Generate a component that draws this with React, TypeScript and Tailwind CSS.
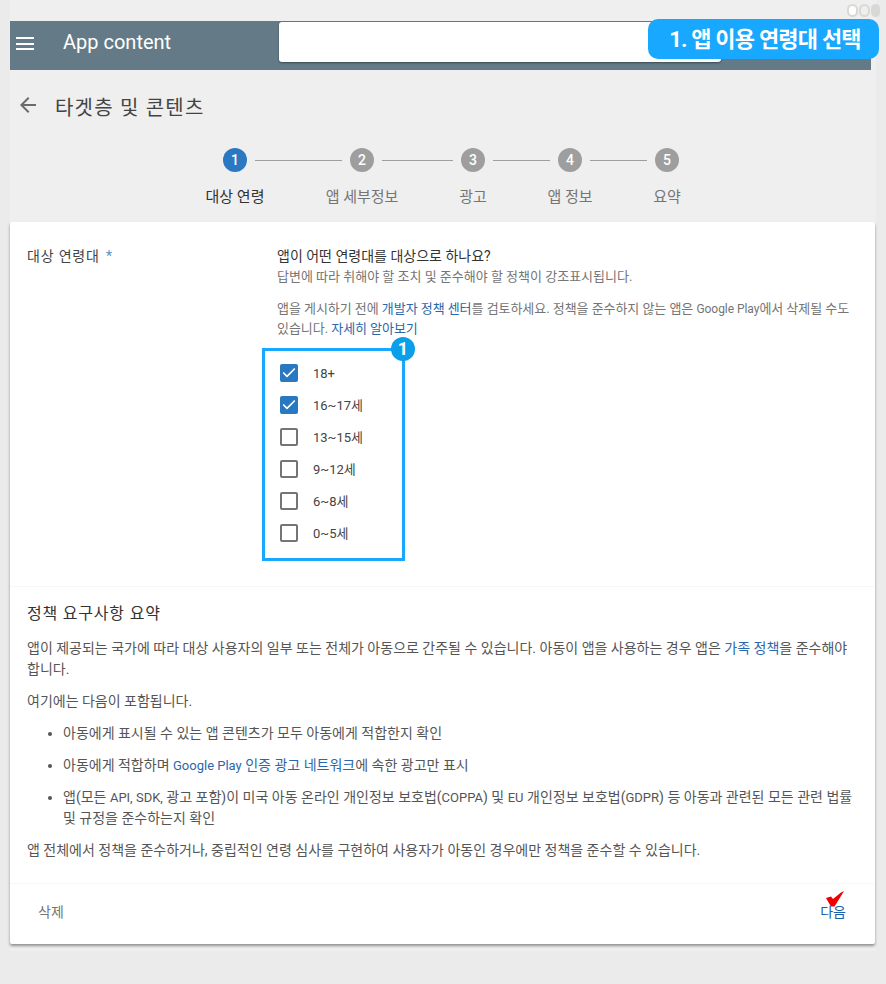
import type { ReactNode } from "react";
import { Check } from "lucide-react";

const fontStack = "font-['Roboto','Noto_Sans_CJK_KR',sans-serif]";

const steps = [
  { label: "대상 연령", line: "w-[87px]" },
  { label: "앱 세부정보", line: "w-[71px]" },
  { label: "광고", line: "w-[57px]" },
  { label: "앱 정보", line: "w-[57px]" },
  { label: "요약", line: "" },
];

const ages = [
  { label: "18+", checked: true },
  { label: "16~17세", checked: true },
  { label: "13~15세", checked: false },
  { label: "9~12세", checked: false },
  { label: "6~8세", checked: false },
  { label: "0~5세", checked: false },
];

// latin runs sit a pixel smaller than the hangul around them
function Latin({ children }: { children: ReactNode }) {
  return <span className="text-[13px]">{children}</span>;
}

function Stepper() {
  return (
    <div className="flex items-start pl-[213px]">
      {steps.map((step, i) => (
        <div key={step.label} className="flex items-start">
          <div className="flex w-6 flex-col items-center">
            <div
              className={`flex h-6 w-6 items-center justify-center rounded-full text-[14px] font-medium text-white ${
                i === 0 ? "bg-[#2b78c2]" : "bg-[#9e9e9e]"
              }`}
            >
              {i + 1}
            </div>
            <span
              className={`mt-[15px] whitespace-nowrap text-[15px] leading-[20px] ${
                i === 0 ? "text-[#333333]" : "text-[#757575]"
              }`}
            >
              {step.label}
            </span>
          </div>
          {step.line && <div className={`mx-2 mt-[12px] h-px bg-[#9e9e9e] ${step.line}`} />}
        </div>
      ))}
    </div>
  );
}

function AgeRow({ label, checked }: { label: string; checked: boolean }) {
  return (
    <div className="flex h-8 items-center pl-[15px]">
      {checked ? (
        <div className="flex h-[18px] w-[18px] items-center justify-center rounded-[2px] bg-[#2b78c2]">
          <Check className="h-4 w-4 text-white" strokeWidth={2.5} />
        </div>
      ) : (
        <div className="h-[18px] w-[18px] rounded-[2px] border-2 border-[#757575]" />
      )}
      <span className="ml-[15px] mt-[2px] text-[13px] text-[#444444]">{label}</span>
    </div>
  );
}

export default function App() {
  return (
    <div className={`relative h-[984px] w-[886px] overflow-hidden bg-[#ebebeb] ${fontStack}`}>
      {/* window dots */}
      <div className="absolute right-[6px] top-[4px] flex gap-[1px]">
        <div className="h-[13px] w-[11px] rounded-full border-2 border-[#d8d8d4] bg-white" />
        <div className="h-[13px] w-[11px] rounded-full border-2 border-[#d8d8d4] bg-[#efefef]" />
        <div className="h-[13px] w-[9px] rounded-full bg-[#d8d8d4]" />
      </div>

      {/* callout */}
      <div className="absolute left-[648px] top-[19px] flex h-10 w-[231px] items-center justify-center rounded-[10px] bg-[#18a8ff] pl-[3px] text-[22px] font-bold tracking-[-0.8px] text-white">
        1. 앱 이용 연령대 선택
      </div>

      <div className="ml-[10px] mt-0 h-[951px] w-[866px] bg-[#efefef] pt-[21px]">
        {/* top bar */}
        <div className="flex h-[49px] w-[861px] items-start bg-[#647a87] pt-px">
          <div className="ml-[6px] mt-[15px] flex h-[13px] w-[18px] flex-col justify-between">
            <div className="h-[2px] bg-white" />
            <div className="h-[2px] bg-white" />
            <div className="h-[2px] bg-white" />
          </div>
          <span className="ml-[29px] mt-[4px] text-[20px] leading-[32px] text-white">App content</span>
          <div className="ml-[108px] h-10 w-[442px] rounded-[3px] bg-white shadow-[0_1px_2px_rgba(0,0,0,0.4)]" />
        </div>

        {/* title */}
        <div className="mt-[22px] flex h-7 items-start">
          <svg className="ml-[6px] mt-px h-6 w-6" viewBox="0 0 24 24" fill="#6b6b6b">
            <path d="M20 11H7.83l5.59-5.59L12 4l-8 8 8 8 1.41-1.41L7.83 13H20v-2z" />
          </svg>
          <h1 className="ml-[15px] mt-[2px] text-[20px] font-normal leading-7 tracking-[1.2px] text-[#444444]">타겟층 및 콘텐츠</h1>
        </div>

        <div className="mt-[28px]">
          <Stepper />
        </div>

        {/* card */}
        <div className="mt-[15px] h-[722px] w-[865px] rounded-[2px] bg-white shadow-[0_2px_3px_rgba(0,0,0,0.4)]">
          <div className="flex h-[365px] border-b border-[#f7f7f7] pl-[17px] pt-[24px]">
            <div className="w-[250px] text-[14px] leading-5 tracking-[0.8px] text-[#444444]">
              대상 연령대 <span className="ml-[2px] text-[#5b8fc7]">*</span>
            </div>
            <div className="w-[578px]">
              <p className="text-[14px] leading-5 text-[#333333]">앱이 어떤 연령대를 대상으로 하나요?</p>
              <p className="mt-px text-[13px] leading-5 text-[#757575]">답변에 따라 취해야 할 조치 및 준수해야 할 정책이 강조표시됩니다.</p>
              <p className="mt-[12px] break-keep text-[13px] leading-[20px] tracking-[-0.05px] text-[#757575]">
                앱을 게시하기 전에 <span className="text-[#2a68ad]">개발자 정책 센터</span>를 검토하세요. 정책을 준수하지 않는 앱은 <span className="text-[12px]">Google Play</span>에서 삭제될 수도 있습니다.{" "}
                <span className="text-[#2a68ad]">자세히 알아보기</span>
              </p>
              <div className="relative -ml-[15px] mt-[9px] h-[213px] w-[143px] border-[3px] border-[#18a8ff] py-[6px]">
                <div className="absolute -right-[13px] -top-[14px] flex h-6 w-6 items-center justify-center rounded-full bg-[#0a9fe8] text-[18px] font-bold leading-none text-white">
                  1
                </div>
                {ages.map((age) => (
                  <AgeRow key={age.label} label={age.label} checked={age.checked} />
                ))}
              </div>
            </div>
          </div>

          <div className="h-[297px] border-b border-[#f7f7f7] px-[17px] pt-[15px] text-[14px] leading-[21px] text-[#555555]">
            <h2 className="text-[16px] font-normal leading-[24px] tracking-[0.8px] text-[#333333]">정책 요구사항 요약</h2>
            <p className="mt-[12px] w-[826px] break-keep">
              앱이 제공되는 국가에 따라 대상 사용자의 일부 또는 전체가 아동으로 간주될 수 있습니다. 아동이 앱을 사용하는 경우 앱은 <span className="text-[#2a68ad]">가족 정책</span>을 준수해야 합니다.
            </p>
            <p className="mt-[11px]">여기에는 다음이 포함됩니다.</p>
            <ul className="mt-[11px] flex list-disc flex-col gap-[11px] pl-[36px]">
              <li>아동에게 표시될 수 있는 앱 콘텐츠가 모두 아동에게 적합한지 확인</li>
              <li>
                아동에게 적합하며 <span className="text-[#2a68ad]"><Latin>Google Play</Latin> 인증 광고 네트워크</span>에 속한 광고만 표시
              </li>
              <li className="break-keep leading-5">
                앱(모든 <Latin>API, SDK,</Latin> 광고 포함)이 미국 아동 온라인 개인정보 보호법(<Latin>COPPA</Latin>) 및 <Latin>EU</Latin> 개인정보 보호법(<Latin>GDPR</Latin>) 등 아동과 관련된 모든 관련 법률 및 규정을 준수하는지 확인
              </li>
            </ul>
            <p className="mt-[12px]">앱 전체에서 정책을 준수하거나, 중립적인 연령 심사를 구현하여 사용자가 아동인 경우에만 정책을 준수할 수 있습니다.</p>
          </div>

          <div className="flex h-[60px] items-center justify-between pb-[4px] pl-[28px] pr-[29px] text-[14px]">
            <span className="text-[#757575]">삭제</span>
            <div className="relative text-[#1a5fa8]">
              다음
              <svg className="absolute -top-[11px] left-[6px] h-[16px] w-[18px]" viewBox="0 0 18 16" fill="#ee0000">
                <path d="M0 7 L5 5.5 L7 8 L15 1.5 L18 0 L15 5 L8.5 15.5 L5 15.5 Z" />
              </svg>
            </div>
          </div>
        </div>
      </div>
    </div>
  );
}
